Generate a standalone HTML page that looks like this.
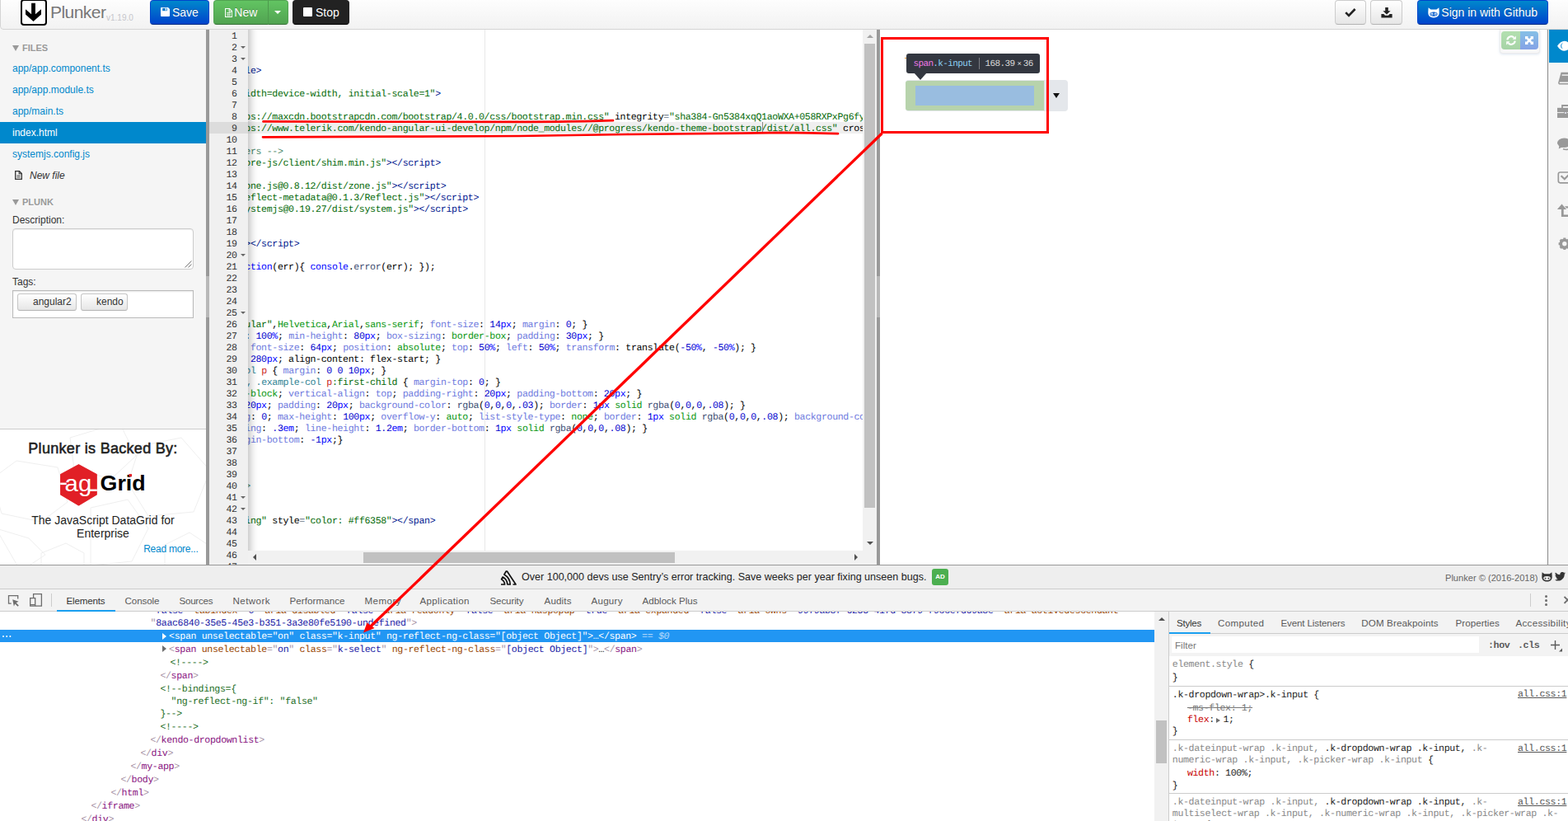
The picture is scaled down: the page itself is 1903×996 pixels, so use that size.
<!DOCTYPE html>
<html lang="en"><head><meta charset="utf-8"><title>Plunker</title>
<style>
*{box-sizing:border-box}
html,body{margin:0;padding:0}
body{width:1903px;height:996px;overflow:hidden;position:relative;background:#fff;font-family:"Liberation Sans",sans-serif;font-size:12px;color:#333}
.abs{position:absolute}
svg{display:block}
/* header */
#hdr{position:absolute;left:0;top:-6px;width:1912px;height:42px;border:1px solid #d4d4d4;border-radius:4px;background:linear-gradient(#fff,#f2f2f2);box-shadow:0 1px 4px rgba(0,0,0,.065)}
.btn{position:absolute;top:0;height:30px;border-radius:4px;font-size:14px;line-height:28px;white-space:nowrap;border:1px solid #ccc}
.btn-blue{background:linear-gradient(#0088cc,#0044cc);border-color:#0044cc #0044cc #002a80;color:#fff;text-shadow:0 -1px 0 rgba(0,0,0,.25)}
.btn-green{background:linear-gradient(#62c462,#51a351);border-color:#51a351 #51a351 #387038;color:#fff;text-shadow:0 -1px 0 rgba(0,0,0,.25)}
.btn-dark{background:linear-gradient(#444,#222);border-color:#222 #222 #000;color:#fff;text-shadow:0 -1px 0 rgba(0,0,0,.25)}
.btn-def{background:linear-gradient(#fff,#e6e6e6);border-color:#ccc #ccc #b3b3b3;color:#333}
/* sidebar */
#side{position:absolute;left:0;top:36px;width:250px;height:649px;background:#f5f5f5;overflow:hidden}
.navh{position:absolute;left:15px;font-size:11px;font-weight:bold;color:#999;text-shadow:0 1px 0 rgba(255,255,255,.5);line-height:20px;white-space:nowrap}
.file{position:absolute;left:0;width:250px;height:26px;line-height:26px;padding-left:15px;font-size:12px;color:#0088cc;white-space:nowrap}
.file.sel{background:#0088cc;color:#fff}
/* editor */
#gut{position:absolute;left:254px;top:36px;width:47px;height:649px;background:#f0f0f0;overflow:hidden}
.ln{position:absolute;right:13.4px;height:14px;line-height:14px;margin-top:1.8px;font-family:"Liberation Mono",monospace;font-size:11.6px;letter-spacing:-0.36px;text-rendering:geometricPrecision;color:#333;white-space:pre}
.fold{position:absolute;left:38px;width:0;height:0;border-left:3px solid transparent;border-right:3px solid transparent;border-top:3px solid #666}
#code{position:absolute;left:301px;top:36px;width:746px;height:632px;background:#fff;overflow:hidden}
.cl{position:absolute;left:-3.7px;height:14px;line-height:14px;margin-top:1.8px;font-family:"Liberation Mono",monospace;font-size:11.6px;letter-spacing:-0.36px;text-rendering:geometricPrecision;color:#000;white-space:pre}
.t{color:#00168e}.s{color:#036a07}.c{color:#4c886b}.k{color:#0000ff}.n{color:#0000cd}.p{color:#6d79de}.v{color:#318495}.g{color:#06960e}.f{color:#3c4c72}.o{color:#687687}.e{color:#cc2a1a}
/* devtools */
.mono{font-family:"Liberation Mono",monospace;font-size:11.6px;letter-spacing:-0.36px;text-rendering:geometricPrecision;white-space:pre}
.tab{position:absolute;top:715px;height:26px;line-height:26px;font-size:12px;color:#5a5a5a;white-space:nowrap}
.el{position:absolute;height:16px;line-height:16px;font-family:"Liberation Mono",monospace;font-size:11.6px;letter-spacing:-0.36px;text-rendering:geometricPrecision;white-space:pre;color:#222}
.tg{color:#881280}.an{color:#994500}.av{color:#1a1aa6}.br{color:#a894a6}.cm{color:#236e25}
.st{position:absolute;height:16px;line-height:16px;font-family:"Liberation Mono",monospace;font-size:11.6px;letter-spacing:-0.36px;text-rendering:geometricPrecision;white-space:pre;color:#222}
.gr{color:#888}.pn{color:#c80000}

</style></head>
<body>
<div id="hdr"></div>
<!-- logo -->
<div class="abs" style="left:25px;top:-1px;width:32px;height:32px;border:2px solid #000;border-radius:4px;background:#fff"></div>
<svg class="abs" style="left:25px;top:0" width="32" height="31" viewBox="0 0 32 31"><path d="M13.100 3.800h4.800v13.400l7.100-6v6.200l-9.500 8.600-9.500-8.600v-6.200l7.100 6z" fill="#000"/></svg>
<div class="abs" style="left:61px;top:2.600px;font-size:21px;letter-spacing:-0.550px;line-height:24px;color:#777;white-space:nowrap;text-shadow:0 1px 0 #fff">Plunker</div>
<div class="abs" style="left:129px;top:15.200px;font-size:10px;line-height:14px;color:#c6c6cc;white-space:nowrap">v1.19.0</div>
<!-- Save -->
<div class="btn btn-blue" style="left:182px;width:72px">
  <svg class="abs" style="left:12px;top:8px" width="11" height="11" viewBox="0 0 11 11"><path d="M0 1a1 1 0 0 1 1-1h8l2 2v8a1 1 0 0 1-1 1H1a1 1 0 0 1-1-1z" fill="#fff"/><rect x="2.2" y="0.8" width="5.6" height="3.4" fill="#0a78cc"/><rect x="5.6" y="1.2" width="1.4" height="2.4" fill="#fff"/></svg>
  <span class="abs" style="left:26px;top:0">Save</span>
</div>
<!-- New -->
<div class="btn btn-green" style="left:259px;width:67px;border-radius:4px 0 0 4px">
  <svg class="abs" style="left:12.500px;top:8.500px" width="9.200" height="11" viewBox="0 0 10 12"><path d="M0.5 0.5h5.5l3.5 3.5v7.5h-9z" fill="none" stroke="#fff" stroke-width="1.2"/><path d="M5.6 0.6v3.8h3.8" fill="none" stroke="#fff" stroke-width="1.1"/><path d="M2.4 6h5.2M2.4 7.8h5.2M2.4 9.6h5.2" stroke="#fff" stroke-width="0.9"/></svg>
  <span class="abs" style="left:24.300px;top:0">New</span>
</div>
<div class="btn btn-green" style="left:325px;width:25px;border-radius:0 4px 4px 0;border-left:1px solid #4d9a4d">
  <div class="abs" style="left:7px;top:12px;width:0;height:0;border-left:4px solid transparent;border-right:4px solid transparent;border-top:4px solid #fff"></div>
</div>
<!-- Stop -->
<div class="btn btn-dark" style="left:355px;width:69px;background:#222">
  <div class="abs" style="left:12px;top:8px;width:11px;height:11px;background:#fff;border-radius:1px"></div>
  <span class="abs" style="left:27px;top:0">Stop</span>
</div>
<!-- right buttons -->
<div class="btn btn-def" style="left:1620px;width:38px">
  <svg class="abs" style="left:11px;top:8px" width="14" height="12" viewBox="0 0 14 12"><path d="M1.2 6.2l3.8 3.8 7.6-8" fill="none" stroke="#222" stroke-width="2.6"/></svg>
</div>
<div class="btn btn-def" style="left:1663px;width:39px">
  <svg class="abs" style="left:12px;top:8px" width="14" height="13" viewBox="0 0 14 13"><path d="M5.2 0h3.6v4.2h2.8L7 8.6 2.4 4.2h2.8z" fill="#222"/><path d="M0.4 8h3l1.6 1.8h4L10.6 8h3v4.6H0.4z" fill="#222"/></svg>
</div>
<div class="btn btn-blue" style="left:1720px;width:159px">
  <svg class="abs" style="left:12px;top:8px" width="14" height="13" viewBox="0 0 14 13"><path d="M0.6 0.2l3 2.2h6.8l3-2.2 0.3 5.4c0.2 4-1.6 6.8-6.7 6.8S0.1 9.6 0.3 5.6z" fill="#fff"/><ellipse cx="7" cy="8.1" rx="4.6" ry="2.6" fill="#0a5fcc"/><circle cx="4.9" cy="8.1" r="1.5" fill="#fff"/><circle cx="9.1" cy="8.1" r="1.5" fill="#fff"/><circle cx="4.9" cy="8.2" r="0.7" fill="#0a5fcc"/><circle cx="9.1" cy="8.2" r="0.7" fill="#0a5fcc"/></svg>
  <span class="abs" style="left:28.300px;top:0">Sign in with Github</span>
</div>

<div id="side">
  <div class="abs" style="left:15px;top:19px;width:0;height:0;border-left:4px solid transparent;border-right:4px solid transparent;border-top:7px solid #999"></div>
  <div class="navh" style="left:27px;top:12px">FILES</div>
  <div class="file" style="top:34px">app/app.component.ts</div>
  <div class="file" style="top:60px">app/app.module.ts</div>
  <div class="file" style="top:86px">app/main.ts</div>
  <div class="file sel" style="top:112px">index.html</div>
  <div class="file" style="top:138px">systemjs.config.js</div>
  <svg class="abs" style="left:18px;top:171px" width="9" height="11" viewBox="0 0 9 11"><path d="M0.7 0.7h4.8l2.8 2.8v6.8H0.7z" fill="none" stroke="#333" stroke-width="1.3"/><path d="M5.2 0.8v3h3" fill="none" stroke="#333" stroke-width="1.1"/><path d="M2.4 6h4.2M2.4 8h4.2" stroke="#333" stroke-width="0.9"/></svg>
  <div class="file" style="top:164px;padding-left:36px;font-style:italic;color:#333">New file</div>
  <div class="abs" style="left:15px;top:206px;width:0;height:0;border-left:4px solid transparent;border-right:4px solid transparent;border-top:7px solid #999"></div>
  <div class="navh" style="left:27px;top:199px">PLUNK</div>
  <div class="abs" style="left:15px;top:223px;font-size:12px;line-height:16px;color:#333">Description:</div>
  <div class="abs" style="left:15px;top:241px;width:220px;height:50px;background:#fff;border:1px solid #ccc;border-radius:4px;box-shadow:inset 0 1px 1px rgba(0,0,0,.075)">
    <svg class="abs" style="right:1px;bottom:1px" width="9" height="9" viewBox="0 0 9 9"><path d="M8.5 0.5l-8 8M8.5 4.5l-4 4" stroke="#777" stroke-width="1"/></svg>
  </div>
  <div class="abs" style="left:15px;top:298px;font-size:12px;line-height:16px;color:#333">Tags:</div>
  <div class="abs" style="left:15px;top:316px;width:220px;height:34px;background:#fff;border:1px solid #bbb;box-shadow:inset 0 1px 2px rgba(0,0,0,.1)">
    <div class="abs" style="left:5px;top:3px;width:72px;height:21px;border:1px solid #c5c5c5;border-bottom-color:#b3b3b3;border-radius:3px;background:linear-gradient(#fff,#e6e6e6);font-size:12px;line-height:19px;color:#333;padding-left:18px">angular2</div>
    <div class="abs" style="left:82px;top:3px;width:57px;height:21px;border:1px solid #c5c5c5;border-bottom-color:#b3b3b3;border-radius:3px;background:linear-gradient(#fff,#e6e6e6);font-size:12px;line-height:19px;color:#333;padding-left:18px">kendo</div>
  </div>
  <!-- ad -->
  <div class="abs" style="left:0;top:484px;width:250px;height:165px;background:#fff;border-top:1px solid #ccc;overflow:hidden">
    <svg class="abs" style="left:0;top:0" width="250" height="165" viewBox="0 0 250 165"><g fill="none" stroke="#efefef" stroke-width="1"><path d="M-10 60l30-22 50 8 12 42-32 24-48-10z"/><path d="M85 10l60-18 20 40-30 28-45-12z"/><path d="M170 20l50-10 35 40-20 50-55 5-25-40z"/><path d="M110 95l45-10 25 35-20 40-50 5z"/><path d="M50 150l30-12 22 12v20H50z"/><path d="M-5 120l40 12 20 20-30 20z"/><path d="M200 140l30-15 30 20v30h-60z"/></g></svg>
    <div class="abs" style="left:0;top:11.500px;width:250px;text-align:center;font-size:18px;letter-spacing:0.300px;-webkit-text-stroke:0.550px #222;line-height:22px;color:#222;white-space:nowrap">Plunker is Backed By:</div>
    <svg class="abs" style="left:70px;top:39px" width="112" height="56" viewBox="70 559.500 112 56"><path d="M95.500 563.200L117.200 575v24.400L95.500 612.500L73.700 599.400V575z" fill="#e11f26" stroke="#e11f26" stroke-width="1.200" stroke-linejoin="round"/><text x="78.600" y="595" font-family="Liberation Sans, sans-serif" font-size="28" fill="#fff" textLength="32.600" lengthAdjust="spacingAndGlyphs">ag</text><rect x="73.200" y="585.100" width="7.500" height="2.500" fill="#fff"/><rect x="108" y="593" width="9.800" height="2.400" fill="#fff"/><text x="121.600" y="594.600" font-family="Liberation Sans, sans-serif" font-size="26" font-weight="bold" fill="#000" textLength="55" lengthAdjust="spacingAndGlyphs">Grid</text><rect x="156.400" y="574.600" width="3.600" height="3.200" fill="#e11f26"/></svg>
    <div class="abs" style="left:0;top:102px;width:250px;text-align:center;font-size:14px;line-height:16px;color:#222">The JavaScript DataGrid for<br>Enterprise</div>
    <div class="abs" style="right:9.500px;top:137px;font-size:12px;letter-spacing:-0.250px;line-height:16px;color:#0088cc;white-space:nowrap">Read more...</div>
  </div>
</div>
<!-- splitter 1 -->
<div class="abs" style="left:250px;top:36px;width:4px;height:649px;background:#999"></div>
<div class="abs" style="left:250px;top:335px;width:4px;height:50px;background:#b8b8b8"></div>

<div id="gut">
<div class="abs" style="left:0;top:112px;width:47px;height:14px;background:#dcdcdc"></div>
<div class="ln" style="top:0px">1</div>
<div class="ln" style="top:14px">2</div>
<div class="fold" style="top:20px"></div>
<div class="ln" style="top:28px">3</div>
<div class="fold" style="top:34px"></div>
<div class="ln" style="top:42px">4</div>
<div class="ln" style="top:56px">5</div>
<div class="ln" style="top:70px">6</div>
<div class="ln" style="top:84px">7</div>
<div class="ln" style="top:98px">8</div>
<div class="ln" style="top:112px">9</div>
<div class="ln" style="top:126px">10</div>
<div class="ln" style="top:140px">11</div>
<div class="ln" style="top:154px">12</div>
<div class="ln" style="top:168px">13</div>
<div class="ln" style="top:182px">14</div>
<div class="ln" style="top:196px">15</div>
<div class="ln" style="top:210px">16</div>
<div class="ln" style="top:224px">17</div>
<div class="ln" style="top:238px">18</div>
<div class="ln" style="top:252px">19</div>
<div class="ln" style="top:266px">20</div>
<div class="fold" style="top:272px"></div>
<div class="ln" style="top:280px">21</div>
<div class="ln" style="top:294px">22</div>
<div class="ln" style="top:308px">23</div>
<div class="ln" style="top:322px">24</div>
<div class="ln" style="top:336px">25</div>
<div class="fold" style="top:342px"></div>
<div class="ln" style="top:350px">26</div>
<div class="ln" style="top:364px">27</div>
<div class="ln" style="top:378px">28</div>
<div class="ln" style="top:392px">29</div>
<div class="ln" style="top:406px">30</div>
<div class="ln" style="top:420px">31</div>
<div class="ln" style="top:434px">32</div>
<div class="ln" style="top:448px">33</div>
<div class="ln" style="top:462px">34</div>
<div class="ln" style="top:476px">35</div>
<div class="ln" style="top:490px">36</div>
<div class="ln" style="top:504px">37</div>
<div class="ln" style="top:518px">38</div>
<div class="ln" style="top:532px">39</div>
<div class="ln" style="top:546px">40</div>
<div class="ln" style="top:560px">41</div>
<div class="fold" style="top:566px"></div>
<div class="ln" style="top:574px">42</div>
<div class="fold" style="top:580px"></div>
<div class="ln" style="top:588px">43</div>
<div class="ln" style="top:602px">44</div>
<div class="ln" style="top:616px">45</div>
<div class="ln" style="top:630px">46</div>
<div class="ln" style="top:644px">47</div>
</div>
<div id="code">
<div class="abs" style="left:0;top:112px;width:746px;height:14px;background:#efefef"></div>
<div class="abs" style="left:287px;top:0;width:1px;height:632px;background:#e8e8e8"></div>
<div class="cl" style="top:42px"><span class="t">le&gt;</span></div>
<div class="cl" style="top:70px"><span class="s">idth=device-width, initial-scale=1"</span><span class="t">&gt;</span></div>
<div class="cl" style="top:98px"><span class="s">ps://maxcdn.bootstrapcdn.com/bootstrap/4.0.0/css/bootstrap.min.css"</span> integrity<span class="o">=</span><span class="s">"sha384-Gn5384xqQ1aoWXA+058RXPxPg6fy4IWvTNh0E263XmFcJlSAwiGgFAW/dAiS6JXm"</span></div>
<div class="cl" style="top:112px"><span class="s">ps://www.telerik.com/kendo-angular-ui-develop/npm/node_modules//@progress/kendo-theme-bootstrap/dist/all.css"</span> crossorigin<span class="o">=</span><span class="s">"anonymous"</span><span class="t">&gt;</span></div>
<div class="cl" style="top:140px"><span class="c">ers --&gt;</span></div>
<div class="cl" style="top:154px"><span class="s">ore-js/client/shim.min.js"</span><span class="t">&gt;&lt;/script&gt;</span></div>
<div class="cl" style="top:182px"><span class="s">one.js@0.8.12/dist/zone.js"</span><span class="t">&gt;&lt;/script&gt;</span></div>
<div class="cl" style="top:196px"><span class="s">eflect-metadata@0.1.3/Reflect.js"</span><span class="t">&gt;&lt;/script&gt;</span></div>
<div class="cl" style="top:210px"><span class="s">ystemjs@0.19.27/dist/system.js"</span><span class="t">&gt;&lt;/script&gt;</span></div>
<div class="cl" style="top:252px"><span class="t">&gt;&lt;/script&gt;</span></div>
<div class="cl" style="top:280px"><span class="k">ction</span>(err){ <span class="k">console</span>.<span class="f">error</span>(err); });</div>
<div class="cl" style="top:350px"><span class="s">ular"</span>,<span class="g">Helvetica</span>,<span class="g">Arial</span>,<span class="g">sans-serif</span>; <span class="p">font-size</span>: <span class="n">14</span><span class="k">px</span>; <span class="p">margin</span>: <span class="n">0</span>; }</div>
<div class="cl" style="top:364px">: <span class="n">100</span><span class="k">%</span>; <span class="p">min-height</span>: <span class="n">80</span><span class="k">px</span>; <span class="p">box-sizing</span>: <span class="g">border-box</span>; <span class="p">padding</span>: <span class="n">30</span><span class="k">px</span>; }</div>
<div class="cl" style="top:378px"> <span class="p">font-size</span>: <span class="n">64</span><span class="k">px</span>; <span class="p">position</span>: <span class="g">absolute</span>; <span class="p">top</span>: <span class="n">50</span><span class="k">%</span>; <span class="p">left</span>: <span class="n">50</span><span class="k">%</span>; <span class="p">transform</span>: translate(<span class="n">-50</span><span class="k">%</span>, <span class="n">-50</span><span class="k">%</span>); }</div>
<div class="cl" style="top:392px"> <span class="n">280</span><span class="k">px</span>; align-content: flex-start; }</div>
<div class="cl" style="top:406px"><span class="v">ol</span> <span class="e">p</span> { <span class="p">margin</span>: <span class="n">0</span> <span class="n">0</span> <span class="n">10</span><span class="k">px</span>; }</div>
<div class="cl" style="top:420px"><span class="v" style="position:relative;left:1.800px">,</span> <span class="v">.example-col</span> <span class="e">p</span><span class="s">:first-child</span> { <span class="p">margin-top</span>: <span class="n">0</span>; }</div>
<div class="cl" style="top:434px"><span class="g">-block</span>; <span class="p">vertical-align</span>: <span class="p">top</span>; <span class="p">padding-right</span>: <span class="n">20</span><span class="k">px</span>; <span class="p">padding-bottom</span>: <span class="n">20</span><span class="k">px</span>; }</div>
<div class="cl" style="top:448px"><span class="n">20</span><span class="k">px</span>; <span class="p">padding</span>: <span class="n">20</span><span class="k">px</span>; <span class="p">background-color</span>: <span class="f">rgba</span>(<span class="n">0</span>,<span class="n">0</span>,<span class="n">0</span>,<span class="n">.03</span>); <span class="p">border</span>: <span class="n">1</span><span class="k">px</span> <span class="g">solid</span> <span class="f">rgba</span>(<span class="n">0</span>,<span class="n">0</span>,<span class="n">0</span>,<span class="n">.08</span>); }</div>
<div class="cl" style="top:462px"><span class="p">g</span>: <span class="n">0</span>; <span class="p">max-height</span>: <span class="n">100</span><span class="k">px</span>; <span class="p">overflow-y</span>: <span class="g">auto</span>; <span class="p">list-style-type</span>: <span class="g">none</span>; <span class="p">border</span>: <span class="n">1</span><span class="k">px</span> <span class="g">solid</span> <span class="f">rgba</span>(<span class="n">0</span>,<span class="n">0</span>,<span class="n">0</span>,<span class="n">.08</span>); <span class="p">background-color</span>: #fff; }</div>
<div class="cl" style="top:476px"><span class="p">ing</span>: <span class="n">.3</span><span class="k">em</span>; <span class="p">line-height</span>: <span class="n">1.2</span><span class="k">em</span>; <span class="p">border-bottom</span>: <span class="n">1</span><span class="k">px</span> <span class="g">solid</span> <span class="f">rgba</span>(<span class="n">0</span>,<span class="n">0</span>,<span class="n">0</span>,<span class="n">.08</span>); }</div>
<div class="cl" style="top:490px"><span class="p">gin-bottom</span>: <span class="n">-1</span><span class="k">px</span>;}</div>
<div class="cl" style="top:546px"><span class="c">&gt;</span></div>
<div class="cl" style="top:588px"><span class="s">ing"</span> style<span class="o">=</span><span class="s">"color: #ff6358"</span><span class="t">&gt;&lt;/span&gt;</span></div>
<div class="abs" style="left:624px;top:112px;width:1px;height:14px;background:#888"></div>
<div class="abs" style="left:0;top:0;width:746px;height:632px;box-shadow:13px 0 12px -12px rgba(0,0,0,.34) inset"></div>
</div>
<div class="abs" style="left:1047px;top:36px;width:17px;height:632px;background:#f1f1f1"></div>
<div class="abs" style="left:1049px;top:53px;width:13px;height:563px;background:#c1c1c1"></div>
<div class="abs" style="left:1052px;top:42px;width:0;height:0;border-left:4px solid transparent;border-right:4px solid transparent;border-bottom:4px solid #a3a3a3"></div>
<div class="abs" style="left:1052px;top:657px;width:0;height:0;border-left:4px solid transparent;border-right:4px solid transparent;border-top:4px solid #505050"></div>
<div class="abs" style="left:301px;top:668px;width:763px;height:17px;background:#f1f1f1"></div>
<div class="abs" style="left:441px;top:670px;width:378px;height:13px;background:#c1c1c1"></div>
<div class="abs" style="left:307px;top:672px;width:0;height:0;border-top:4px solid transparent;border-bottom:4px solid transparent;border-right:4px solid #505050"></div>
<div class="abs" style="left:1037px;top:672px;width:0;height:0;border-top:4px solid transparent;border-bottom:4px solid transparent;border-left:4px solid #505050"></div>
<div class="abs" style="left:1064px;top:36px;width:4px;height:649px;background:#999"></div>
<div class="abs" style="left:1064px;top:335px;width:4px;height:50px;background:#b8b8b8"></div>
<!-- preview -->
<div class="abs" style="left:1068px;top:36px;width:810px;height:649px;background:#fff"></div>
<!-- dropdown widget -->
<div class="abs" style="left:1098.500px;top:97.300px;width:197.500px;height:37.500px;border-radius:4px;background:#e4e7eb"></div>
<div class="abs" style="left:1099px;top:98px;width:168px;height:36px;border-radius:3px 0 0 3px;background:#b7d3ac"></div>
<div class="abs" style="left:1111px;top:104px;width:144px;height:24px;background:#99bde0"></div>
<div class="abs" style="left:1278px;top:113px;width:0;height:0;border-left:4px solid transparent;border-right:4px solid transparent;border-top:6px solid #111"></div>
<div class="abs" style="left:1098px;top:70px;width:3px;height:1px;background:#e8a040"></div>
<!-- tooltip -->
<div class="abs" style="left:1100px;top:65px;width:162px;height:24px;border-radius:3px;background:#333740"></div>
<div class="abs" style="left:1109px;top:88px;width:0;height:0;border-left:8px solid transparent;border-right:8px solid transparent;border-top:9px solid #333740"></div>
<div class="abs mono" style="left:1108.500px;top:66.900px;height:24px;line-height:23px;font-size:11px;letter-spacing:-0.640px;color:#d9d9d9"><span style="color:#ee78e6">span</span><span style="color:#8dd0f5">.k-input</span></div>
<div class="abs" style="left:1188px;top:70px;width:1px;height:14px;background:#7a7d84"></div>
<div class="abs mono" style="left:1195.500px;top:66.900px;height:24px;line-height:23px;font-size:11px;letter-spacing:-0.600px;color:#d9d9d9">168.39<span style="font-size:9px;padding:0 2.500px 0 2.900px">×</span>36</div>
<!-- refresh / expand -->
<div class="abs" style="left:1820px;top:36px;width:49px;height:28.500px;border-radius:0 0 4px 4px;background:#f8f8f8;border:1px solid #ececec;border-top:0;box-shadow:0 1px 3px rgba(120,150,200,.25)"></div>
<div class="abs" style="left:1822px;top:38px;width:23px;height:22px;border-radius:4px 0 0 4px;background:linear-gradient(#b3e0b0,#a6d3a6)">
  <svg class="abs" style="left:6px;top:5px" width="12" height="12" viewBox="0 0 12 12"><path d="M1.300 5.400A4.700 4.700 0 0 1 9.400 2.700" fill="none" stroke="#fff" stroke-width="2.100"/><path d="M7.600 4.800h4.200V0.600z" fill="#fff"/><path d="M10.700 6.600A4.700 4.700 0 0 1 2.600 9.300" fill="none" stroke="#fff" stroke-width="2.100"/><path d="M4.400 7.200H0.200v4.200z" fill="#fff"/></svg>
</div>
<div class="abs" style="left:1845px;top:38px;width:22px;height:22px;border-radius:0 4px 4px 0;background:linear-gradient(#86c0e6,#84a2e6)">
  <svg class="abs" style="left:6px;top:6px" width="10" height="10" viewBox="0 0 10 10"><path d="M0 0h4L2.9 1.1 5 3.2 7.1 1.1 6 0h4v4L8.9 2.9 6.8 5 8.9 7.1 10 6v4H6l1.1-1.1L5 6.8 2.9 8.9 4 10H0V6l1.1 1.1L3.2 5 1.1 2.9 0 4z" fill="#fff"/></svg>
</div>
<!-- right bar -->
<div class="abs" style="left:1878px;top:36px;width:25px;height:649px;background:#f5f5f5"></div><div class="abs" style="left:1878px;top:36px;width:1.300px;height:649px;background:#8a8a8a"></div>
<div class="abs" style="left:1880px;top:36px;width:23px;height:40px;background:#0088cc"></div>
<svg class="abs" style="left:1880px;top:36px" width="23" height="290" viewBox="0 0 23 290">
  <!-- eye -->
  <path d="M10 19.800c2.600-4 5.600-6 8.600-6s6 2 8.600 6c-2.600 4-5.600 6-8.600 6s-6-2-8.600-6z" fill="#fff"/>
  <path d="M17 15.600a4.700 4.700 0 0 0 0 8.400a6.500 6.500 0 0 1 0-8.400z" fill="#0088cc"/>
  <path d="M15.200 17.200a4 4 0 0 0 0 5.200a8 8 0 0 1 0-5.200z" fill="#2a8fe0"/>
  <!-- book -->
  <path d="M14.600 51.700H28V66.600H13.200a2.100 2.100 0 0 1-2-2.700z" fill="#999"/>
  <rect x="15.600" y="54.400" width="13" height="1.400" fill="#f5f5f5"/>
  <path d="M13.300 63.600H28v1.500H13.300a0.750 0.750 0 0 1 0-1.500z" fill="#f5f5f5"/>
  <!-- briefcase -->
  <path d="M16 95v-3h8" fill="none" stroke="#999" stroke-width="1.800"/>
  <rect x="10" y="94.800" width="18" height="5.300" fill="#999"/><rect x="10" y="101.100" width="18" height="5.900" fill="#999"/>
  <rect x="18.200" y="99" width="3.600" height="4.200" rx="1" fill="#999"/><rect x="19.200" y="100" width="1.600" height="2" fill="#e8e8f5"/>
  <rect x="17.400" y="93" width="4" height="1.200" fill="#f5f5f5"/>
  <!-- comments -->
  <ellipse cx="18.300" cy="137.300" rx="8.300" ry="5.800" fill="#999"/><path d="M12.500 140.500l-0.800 4 4.800-2.200z" fill="#999"/>
  <path d="M17 144.800c3 1 7 0.600 9-1.800" fill="none" stroke="#999" stroke-width="1.500"/>
  <!-- check square -->
  <rect x="11.300" y="173" width="14" height="12.800" rx="2.200" fill="none" stroke="#999" stroke-width="1.700"/>
  <path d="M14.600 177.200l4.200 4 5-5" fill="none" stroke="#999" stroke-width="2.200"/>
  <!-- retweet -->
  <path d="M9.900 218l5.600-6.400 5.600 6.400h-3.400v6.500h6v2.600h-8.800V218z" fill="#999"/>
  <path d="M19 214.200h5v2.400h-3z" fill="#999"/>
  <!-- cog -->
  <circle cx="18.800" cy="259.800" r="4.600" fill="none" stroke="#999" stroke-width="3.400"/>
  <g stroke="#999" stroke-width="3"><path d="M18.800 252.600v14.400M11.600 259.800h14.400M13.700 254.700l10.200 10.200M23.900 254.700l-10.200 10.200"/></g>
  <circle cx="18.800" cy="259.800" r="2.700" fill="#f5f5f5"/>
</svg>
<!-- bottom border of main -->
<div class="abs" style="left:0;top:685px;width:1903px;height:1px;background:#999"></div>

<div class="abs" style="left:0;top:686px;width:1903px;height:28px;background:#eee"></div>
<svg class="abs" style="left:607px;top:692px" width="20" height="18" viewBox="0 0 20 18"><path d="M1 17h4.600a8 8 0 0 0-4-6.300l1.600-2.800a11 11 0 0 1 5.700 9.100h3.300A14.500 14.500 0 0 0 4.900 5l2.400-4 1.100 0 10.600 16h-3.500" fill="none" stroke="#111" stroke-width="1.700" stroke-linejoin="round"/></svg>
<div class="abs" style="left:633px;top:691px;font-size:12.56px;line-height:18px;color:#222;white-space:nowrap">Over 100,000 devs use Sentry’s error tracking. Save weeks per year fixing unseen bugs.</div>
<div class="abs" style="left:1131px;top:690px;width:20px;height:20px;border-radius:3px;background:#4caf50;color:#fff;font-size:8px;font-weight:bold;line-height:20px;text-align:center">AD</div>
<div class="abs" style="left:1754px;top:692px;font-size:11.100px;line-height:18px;color:#666;white-space:nowrap">Plunker © (2016-2018)</div>
<svg class="abs" style="left:1871px;top:694px" width="13" height="12" viewBox="0 0 14 13"><path d="M0.600 0.200l3 2.200h6.800l3-2.200 0.300 5.400c0.200 4-1.600 6.800-6.700 6.800S0.100 9.600 0.300 5.600z" fill="#333"/><ellipse cx="7" cy="8.100" rx="4.600" ry="2.600" fill="#eee"/><circle cx="4.900" cy="8.200" r="1" fill="#333"/><circle cx="9.100" cy="8.200" r="1" fill="#333"/></svg>
<svg class="abs" style="left:1887px;top:694px" width="13" height="11" viewBox="0 0 13 11"><path d="M13 1.300c-.5.200-1 .4-1.500.4.500-.3 1-.9 1.200-1.500-.5.300-1.100.500-1.700.600A2.700 2.700 0 0 0 6.400 3.300C4.200 3.200 2.200 2.100.9.500.1 1.800.5 3.300 1.700 4.100c-.4 0-.8-.1-1.200-.3 0 1.300.9 2.400 2.100 2.600-.4.100-.8.100-1.200 0 .3 1.100 1.300 1.800 2.500 1.900C2.900 9.100 1.500 9.500 0 9.400c1.200.8 2.600 1.200 4.100 1.200 4.900 0 7.600-4.100 7.600-7.600v-.3c.5-.4 1-.9 1.300-1.400z" fill="#333"/></svg>
<div class="abs" style="left:0;top:714px;width:1903px;height:1px;background:#ccc"></div>

<div class="abs" style="left:0;top:715px;width:1903px;height:26px;background:#f3f3f3"></div>
<div class="abs" style="left:0;top:741px;width:1903px;height:1px;background:#ccc"></div>
<svg class="abs" style="left:9px;top:721px" width="15" height="15" viewBox="0 0 15 15"><path d="M10.500 1.600h-9v9.600h3.200" fill="none" stroke="#6e6e6e" stroke-width="1.300"/><path d="M12.700 5.400V1.600h-3" fill="none" stroke="#6e6e6e" stroke-width="1.300"/><path d="M6.200 6.200l7.400 2.600-3 1.400 3.200 3.200-1.300 1.300-3.200-3.200-1.400 3z" fill="#6e6e6e"/></svg>
<svg class="abs" style="left:36px;top:720px" width="16" height="16" viewBox="0 0 16 16"><path d="M4.600 5.200V0.700h9.800v14.400H7" fill="none" stroke="#6e6e6e" stroke-width="1.300"/><rect x="0.700" y="5.600" width="6" height="9.500" fill="#f3f3f3" stroke="#6e6e6e" stroke-width="1.300"/><path d="M0.700 13.600h6" stroke="#6e6e6e" stroke-width="1.200"/></svg>
<div class="abs" style="left:62px;top:720px;width:1px;height:16px;background:#ccc"></div>
<div class="tab" style="top:715.700px;left:80.5px;font-size:11.6px;letter-spacing:-0.195px;color:#333;">Elements</div>
<div class="tab" style="top:715.700px;left:151.5px;font-size:11.6px;letter-spacing:-0.094px;">Console</div>
<div class="tab" style="top:715.700px;left:217.5px;font-size:11.6px;letter-spacing:-0.261px;">Sources</div>
<div class="tab" style="top:715.700px;left:282.5px;font-size:11.6px;letter-spacing:0.409px;">Network</div>
<div class="tab" style="top:715.700px;left:351.5px;font-size:11.6px;letter-spacing:0.059px;">Performance</div>
<div class="tab" style="top:715.700px;left:442.5px;font-size:11.6px;letter-spacing:0.420px;">Memory</div>
<div class="tab" style="top:715.700px;left:509.5px;font-size:11.6px;letter-spacing:0.324px;">Application</div>
<div class="tab" style="top:715.700px;left:594.5px;font-size:11.6px;letter-spacing:-0.131px;">Security</div>
<div class="tab" style="top:715.700px;left:660.5px;font-size:11.6px;letter-spacing:0.151px;">Audits</div>
<div class="tab" style="top:715.700px;left:717.5px;font-size:11.6px;letter-spacing:0.247px;">Augury</div>
<div class="tab" style="top:715.700px;left:779.5px;font-size:11.6px;letter-spacing:-0.006px;">Adblock Plus</div>
<div class="abs" style="left:69px;top:740px;width:71px;height:2px;background:#1a9ff0"></div>
<div class="abs" style="left:1857px;top:720px;width:1px;height:16px;background:#ccc"></div>
<svg class="abs" style="left:1873px;top:721px" width="8" height="16" viewBox="0 0 8 16"><circle cx="3.500" cy="2.600" r="1.500" fill="#6e6e6e"/><circle cx="3.500" cy="7.500" r="1.500" fill="#6e6e6e"/><circle cx="3.500" cy="12.400" r="1.500" fill="#6e6e6e"/></svg>
<svg class="abs" style="left:1896px;top:722px" width="7" height="12" viewBox="0 0 7 12"><path d="M2.500 1.800l8 8M10.500 1.800l-8 8" stroke="#6e6e6e" stroke-width="1.900" fill="none"/></svg>
<div class="abs" style="left:0;top:742px;width:1401px;height:254px;background:#fff;overflow:hidden">
<div class="el" style="top:-8px;left:182.6px;"><span class="br">"</span><span class="av">false</span><span class="br">"</span> <span class="an">tabindex</span><span class="br">="</span><span class="av">0</span><span class="br">"</span> <span class="an">aria-disabled</span><span class="br">="</span><span class="av">false</span><span class="br">"</span> <span class="an">aria-readonly</span><span class="br">="</span><span class="av">false</span><span class="br">"</span> <span class="an">aria-haspopup</span><span class="br">="</span><span class="av">true</span><span class="br">"</span> <span class="an">aria-expanded</span><span class="br">="</span><span class="av">false</span><span class="br">"</span> <span class="an">aria-owns</span><span class="br">="</span><span class="av">9979ab8f-6255-417d-8879-f9cce7d69a8e</span><span class="br">"</span> <span class="an">aria-activedescendant</span><span class="br">=</span></div>
<div class="el" style="top:7px;left:182.6px;"><span class="br">"</span><span class="av">8aac6840-35e5-45e3-b351-3a3e80fe5190-undefined</span><span class="br">"&gt;</span></div>
<div class="abs" style="left:0;top:22px;width:1401px;height:15px;background:#2196f3"></div>
<div class="abs" style="left:2.500px;top:29px;width:2.400px;height:2.400px;border-radius:1.200px;background:#fff;box-shadow:4.200px 0 0 #fff,8.400px 0 0 #fff"></div>
<div class="abs" style="left:197px;top:25.500px;width:0;height:0;border-top:4px solid transparent;border-bottom:4px solid transparent;border-left:5.200px solid #fff"></div>
<div class="el" style="top:23px;left:205.1px;color:#fff">&lt;span unselectable="on" class="k-input" ng-reflect-ng-class="[object Object]"&gt;…&lt;/span&gt;<span style="color:#b5d9fb"> == <i>$0</i></span></div>
<div class="abs" style="left:197px;top:41px;width:0;height:0;border-top:4px solid transparent;border-bottom:4px solid transparent;border-left:5.200px solid #6e6e6e"></div>
<div class="el" style="top:39px;left:205.1px;"><span class="br">&lt;</span><span class="tg">span</span> <span class="an">unselectable</span><span class="br">="</span><span class="av">on</span><span class="br">"</span> <span class="an">class</span><span class="br">="</span><span class="av">k-select</span><span class="br">"</span> <span class="an">ng-reflect-ng-class</span><span class="br">="</span><span class="av">[object Object]</span><span class="br">"</span><span class="br">&gt;</span>…<span class="br">&lt;/</span><span class="tg">span</span><span class="br">&gt;</span></div>
<div class="el" style="top:55px;left:206.4px;"><span class="cm">&lt;!----&gt;</span></div>
<div class="el" style="top:71px;left:194.4px;"><span class="br">&lt;/</span><span class="tg">span</span><span class="br">&gt;</span></div>
<div class="el" style="top:87px;left:194.4px;line-height:15px"><span class="cm">&lt;!--bindings={</span></div>
<div class="el" style="top:102px;left:194.4px;line-height:15px"><span class="cm">  "ng-reflect-ng-if": "false"</span></div>
<div class="el" style="top:117px;left:194.4px;line-height:16px"><span class="cm">}--&gt;</span></div>
<div class="el" style="top:133px;left:194.4px;"><span class="cm">&lt;!----&gt;</span></div>
<div class="el" style="top:149px;left:182.4px;"><span class="br">&lt;/</span><span class="tg">kendo-dropdownlist</span><span class="br">&gt;</span></div>
<div class="el" style="top:165px;left:170.4px;"><span class="br">&lt;/</span><span class="tg">div</span><span class="br">&gt;</span></div>
<div class="el" style="top:181px;left:158.4px;"><span class="br">&lt;/</span><span class="tg">my-app</span><span class="br">&gt;</span></div>
<div class="el" style="top:197px;left:146.4px;"><span class="br">&lt;/</span><span class="tg">body</span><span class="br">&gt;</span></div>
<div class="el" style="top:213px;left:134.4px;"><span class="br">&lt;/</span><span class="tg">html</span><span class="br">&gt;</span></div>
<div class="el" style="top:229px;left:110.4px;"><span class="br">&lt;/</span><span class="tg">iframe</span><span class="br">&gt;</span></div>
<div class="el" style="top:245px;left:98.4px;"><span class="br">&lt;/</span><span class="tg">div</span><span class="br">&gt;</span></div>
</div>
<div class="abs" style="left:1401px;top:742px;width:17px;height:254px;background:#f1f1f1"></div>
<div class="abs" style="left:1403px;top:874px;width:13px;height:52px;background:#c1c1c1"></div>
<div class="abs" style="left:1405.500px;top:749px;width:0;height:0;border-left:4px solid transparent;border-right:4px solid transparent;border-bottom:4px solid #505050"></div>
<div class="abs" style="left:1418px;top:742px;width:1px;height:254px;background:#ccc"></div>
<div class="abs" style="left:1419px;top:742px;width:484px;height:254px;background:#fff;overflow:hidden">
<div class="abs" style="left:0;top:0;width:484px;height:26px;background:#f3f3f3"></div>
<div class="abs" style="left:0;top:26px;width:484px;height:1px;background:#ccc"></div>
<div class="abs" style="left:0;top:27px;width:484px;height:27px;background:#f3f3f3"></div>
<div class="abs" style="left:0;top:25px;width:50px;height:2px;background:#1a9ff0"></div>
<div class="tab" style="top:1px;left:9.0px;font-size:11.6px;letter-spacing:-0.260px;color:#333;">Styles</div>
<div class="tab" style="top:1px;left:59.0px;font-size:11.6px;letter-spacing:0.353px;">Computed</div>
<div class="tab" style="top:1px;left:135.5px;font-size:11.6px;letter-spacing:-0.140px;">Event Listeners</div>
<div class="tab" style="top:1px;left:233.3px;font-size:11.6px;letter-spacing:0.132px;">DOM Breakpoints</div>
<div class="tab" style="top:1px;left:347.5px;font-size:11.6px;letter-spacing:0.047px;">Properties</div>
<div class="tab" style="top:1px;left:420.4px;font-size:11.6px;letter-spacing:0.327px;">Accessibility</div>
<div class="abs" style="left:3px;top:30px;width:373px;height:20px;background:#fff"></div>
<div class="abs" style="left:7px;top:30px;height:20px;line-height:21px;font-size:11.600px;color:#777">Filter</div>
<div class="abs mono" style="left:387px;top:32px;height:20px;line-height:20px;color:#5a5a5a;font-weight:bold">:hov</div>
<div class="abs mono" style="left:423px;top:32px;height:20px;line-height:20px;color:#5a5a5a;font-weight:bold">.cls</div>
<svg class="abs" style="left:463px;top:35px" width="15" height="15" viewBox="0 0 15 15"><path d="M5.500 0v11M0 5.500h11" stroke="#5a5a5a" stroke-width="1.400"/><path d="M14 9.500v4H10z" fill="#5a5a5a"/></svg>
<div class="st" style="top:56.5px;left:3.8px;"><span class="gr">element.style</span> {</div>
<div class="st" style="top:72.8px;left:3.8px;">}</div>
<div class="abs" style="left:0;top:90px;width:484px;height:1px;background:#ccc"></div>
<div class="st" style="top:93.5px;left:3.8px;">.k-dropdown-wrap&gt;.k-input {</div>
<div class="st" style="top:93.1px;left:423.0px;color:#555;text-decoration:underline">all.css:1</div>
<div class="st" style="top:109.6px;left:21.9px;color:#777;text-decoration:line-through">-ms-flex: 1;</div>
<div class="st" style="top:124.4px;left:21.9px;"><span class="pn">flex</span>:<span style="display:inline-block;width:0;height:0;border-top:3.500px solid transparent;border-bottom:3.500px solid transparent;border-left:5.500px solid #6e6e6e;margin:0 3.500px 0 2px;vertical-align:-0.500px"></span>1;</div>
<div class="st" style="top:138.1px;left:3.8px;">}</div>
<div class="abs" style="left:0;top:155px;width:484px;height:1px;background:#ccc"></div>
<div class="st" style="top:159.1px;left:3.8px;"><span class="gr">.k-dateinput-wrap .k-input, </span>.k-dropdown-wrap .k-input,<span class="gr"> .k-</span></div>
<div class="st" style="top:159.1px;left:423.0px;color:#555;text-decoration:underline">all.css:1</div>
<div class="st" style="top:173.0px;left:3.8px;"><span class="gr">numeric-wrap .k-input, .k-picker-wrap .k-input</span> {</div>
<div class="st" style="top:189.1px;left:21.9px;"><span class="pn">width</span>: 100%;</div>
<div class="st" style="top:203.6px;left:3.8px;">}</div>
<div class="abs" style="left:0;top:220px;width:484px;height:1px;background:#ccc"></div>
<div class="st" style="top:224.2px;left:3.8px;"><span class="gr">.k-dateinput-wrap .k-input, </span>.k-dropdown-wrap .k-input,<span class="gr"> .k-</span></div>
<div class="st" style="top:224.2px;left:423.0px;color:#555;text-decoration:underline">all.css:1</div>
<div class="st" style="top:237.5px;left:3.8px;"><span class="gr">multiselect-wrap .k-input, .k-numeric-wrap .k-input, .k-picker-wrap .k-</span></div>
<div class="st" style="top:251.8px;left:3.8px;"><span class="gr">input</span> {</div>
</div>
<svg class="abs" style="left:0;top:0;pointer-events:none" width="1903" height="996" viewBox="0 0 1903 996">
  <rect x="1070.500" y="46.500" width="201" height="114" fill="none" stroke="#ff0000" stroke-width="3"/>
  <path d="M319.500 147.400C420 147.600 560 148.200 640 147.800S720 146.600 744 146.200" fill="none" stroke="#ff0000" stroke-width="2.700" stroke-linecap="round"/>
  <path d="M319 166.300L480 165.700L630 165L760 163L900 161.700L950 160.900L985 161.300L1017 162.200" fill="none" stroke="#ff0000" stroke-width="2.700" stroke-linecap="round" stroke-linejoin="round"/>
  <path d="M1070.500 161.800L448.700 761" fill="none" stroke="#ff0000" stroke-width="3.300"/>
  <path d="M441 767.500L445.500 755.500L454.500 762z" fill="#ff0000"/>
</svg>

</body></html>
